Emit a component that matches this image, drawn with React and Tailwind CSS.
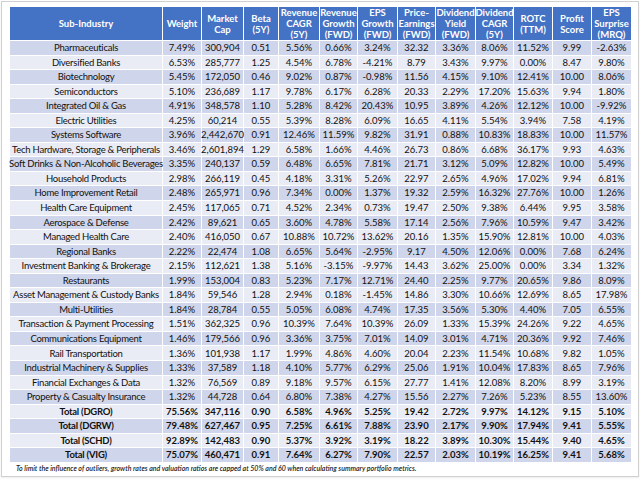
import React from 'react';

const headers = [
  ['Sub-Industry'],
  ['Weight'],
  ['Market', 'Cap'],
  ['Beta', '(5Y)'],
  ['Revenue', 'CAGR', '(5Y)'],
  ['Revenue', 'Growth', '(FWD)'],
  ['EPS', 'Growth', '(FWD)'],
  ['Price-', 'Earnings', '(FWD)'],
  ['Dividend', 'Yield', '(FWD)'],
  ['Dividend', 'CAGR', '(5Y)'],
  ['ROTC', '(TTM)'],
  ['Profit', 'Score'],
  ['EPS', 'Surprise', '(MRQ)'],
];

const rows = [
  ['Pharmaceuticals', '7.49%', '300,904', '0.51', '5.56%', '0.66%', '3.24%', '32.32', '3.36%', '8.06%', '11.52%', '9.99', '-2.63%'],
  ['Diversified Banks', '6.53%', '285,777', '1.25', '4.54%', '6.78%', '-4.21%', '8.79', '3.43%', '9.97%', '0.00%', '8.47', '9.80%'],
  ['Biotechnology', '5.45%', '172,050', '0.46', '9.02%', '0.87%', '-0.98%', '11.56', '4.15%', '9.10%', '12.41%', '10.00', '8.06%'],
  ['Semiconductors', '5.10%', '236,689', '1.17', '9.78%', '6.17%', '6.28%', '20.33', '2.29%', '17.20%', '15.63%', '9.94', '1.80%'],
  ['Integrated Oil & Gas', '4.91%', '348,578', '1.10', '5.28%', '8.42%', '20.43%', '10.95', '3.89%', '4.26%', '12.12%', '10.00', '-9.92%'],
  ['Electric Utilities', '4.25%', '60,214', '0.55', '5.39%', '8.28%', '6.09%', '16.65', '4.11%', '5.54%', '3.94%', '7.58', '4.19%'],
  ['Systems Software', '3.96%', '2,442,670', '0.91', '12.46%', '11.59%', '9.82%', '31.91', '0.88%', '10.83%', '18.83%', '10.00', '11.57%'],
  ['Tech Hardware, Storage & Peripherals', '3.46%', '2,601,894', '1.29', '6.58%', '1.66%', '4.46%', '26.73', '0.86%', '6.68%', '36.17%', '9.93', '4.63%'],
  ['Soft Drinks & Non-Alcoholic Beverages', '3.35%', '240,137', '0.59', '6.48%', '6.65%', '7.81%', '21.71', '3.12%', '5.09%', '12.82%', '10.00', '5.49%'],
  ['Household Products', '2.98%', '266,119', '0.45', '4.18%', '3.31%', '5.26%', '22.97', '2.65%', '4.96%', '17.02%', '9.94', '6.81%'],
  ['Home Improvement Retail', '2.48%', '265,971', '0.96', '7.34%', '0.00%', '1.37%', '19.32', '2.59%', '16.32%', '27.76%', '10.00', '1.26%'],
  ['Health Care Equipment', '2.45%', '117,065', '0.71', '4.52%', '2.34%', '0.73%', '19.47', '2.50%', '9.38%', '6.44%', '9.95', '3.58%'],
  ['Aerospace & Defense', '2.42%', '89,621', '0.65', '3.60%', '4.78%', '5.58%', '17.14', '2.56%', '7.96%', '10.59%', '9.47', '3.42%'],
  ['Managed Health Care', '2.40%', '416,050', '0.67', '10.88%', '10.72%', '13.62%', '20.16', '1.35%', '15.90%', '12.81%', '10.00', '4.03%'],
  ['Regional Banks', '2.22%', '22,474', '1.08', '6.65%', '5.64%', '-2.95%', '9.17', '4.50%', '12.06%', '0.00%', '7.68', '6.24%'],
  ['Investment Banking & Brokerage', '2.15%', '112,621', '1.38', '5.16%', '-3.15%', '-9.97%', '14.43', '3.62%', '25.00%', '0.00%', '3.34', '1.32%'],
  ['Restaurants', '1.99%', '153,004', '0.83', '5.23%', '7.17%', '12.71%', '24.40', '2.25%', '9.77%', '20.65%', '9.86', '8.09%'],
  ['Asset Management & Custody Banks', '1.84%', '59,546', '1.28', '2.94%', '0.18%', '-1.45%', '14.86', '3.30%', '10.66%', '12.69%', '8.65', '17.98%'],
  ['Multi-Utilities', '1.84%', '28,784', '0.55', '5.05%', '6.08%', '4.74%', '17.35', '3.56%', '5.30%', '4.40%', '7.05', '6.55%'],
  ['Transaction & Payment Processing', '1.51%', '362,325', '0.96', '10.39%', '7.64%', '10.39%', '26.09', '1.33%', '15.39%', '24.26%', '9.22', '4.65%'],
  ['Communications Equipment', '1.46%', '179,566', '0.96', '3.36%', '3.75%', '7.01%', '14.09', '3.01%', '4.71%', '20.36%', '9.92', '7.46%'],
  ['Rail Transportation', '1.36%', '101,938', '1.17', '1.99%', '4.86%', '4.60%', '20.04', '2.23%', '11.54%', '10.68%', '9.82', '1.05%'],
  ['Industrial Machinery & Supplies', '1.33%', '37,589', '1.18', '4.10%', '5.77%', '6.29%', '25.06', '1.91%', '10.04%', '17.83%', '8.65', '7.96%'],
  ['Financial Exchanges & Data', '1.32%', '76,569', '0.89', '9.18%', '9.57%', '6.15%', '27.77', '1.41%', '12.08%', '8.20%', '8.99', '3.19%'],
  ['Property & Casualty Insurance', '1.32%', '44,728', '0.64', '6.80%', '7.38%', '4.27%', '15.56', '2.27%', '7.26%', '5.23%', '8.55', '13.60%'],
];

const totals = [
  ['Total (DGRO)', '75.56%', '347,116', '0.90', '6.58%', '4.96%', '5.25%', '19.42', '2.72%', '9.97%', '14.12%', '9.15', '5.10%'],
  ['Total (DGRW)', '79.48%', '627,467', '0.95', '7.25%', '6.61%', '7.88%', '23.90', '2.17%', '9.90%', '17.94%', '9.41', '5.55%'],
  ['Total (SCHD)', '92.89%', '142,483', '0.90', '5.37%', '3.92%', '3.19%', '18.22', '3.89%', '10.30%', '15.44%', '9.40', '4.65%'],
  ['Total (VIG)', '75.07%', '460,471', '0.91', '7.64%', '6.27%', '7.90%', '22.57', '2.03%', '10.19%', '16.25%', '9.41', '5.68%'],
];

function App() {
  const all = [...rows.map((r) => ({ r, bold: false })), ...totals.map((r) => ({ r, bold: true }))];

  return (
    <div className="w-[640px] h-[481px] bg-white p-[1px] font-['Lato',sans-serif]">
      <div className="w-[638px] h-[476px] border border-[#d0d0d0] bg-white pl-[8px] pt-[5px] shadow-[0_1px_2px_rgba(0,0,0,0.08)]">
        <div className="grid w-[621px] grid-cols-[152px_38px_41px_34px_40px_37px_39px_37px_39px_37px_38px_38px_39px] grid-rows-[33px] auto-rows-[13.55px] gap-px bg-white">
          {headers.map((h, i) => (
            <div
              key={i}
              className="flex flex-col items-center justify-center bg-[#4472c4] text-[9.5px] font-bold leading-[11px] text-white"
            >
              {h.map((line) => (
                <span key={line}>{line}</span>
              ))}
            </div>
          ))}
          {all.map(({ r, bold }, ri) =>
            r.map((cell, ci) => (
              <div
                key={ri + '-' + ci}
                className={
                  'flex items-center justify-center whitespace-nowrap text-[9.5px] leading-none text-[#111] ' +
                  (ri % 2 === 0 ? 'bg-[#cfd5ea] ' : 'bg-[#e9ebf5] ') +
                  (ci === 0 ? 'tracking-[-0.25px] ' : '') +
                  (bold ? 'font-bold' : '')
                }
              >
                {cell}
              </div>
            ))
          )}
        </div>
        <p className="mt-[3px] pl-[6px] text-[7px] font-semibold italic leading-none text-[#222]">
          To limit the influence of outliers, growth rates and valuation ratios are capped at 50% and 60 when calculating summary portfolio metrics.
        </p>
      </div>
    </div>
  );
}

export default App;
